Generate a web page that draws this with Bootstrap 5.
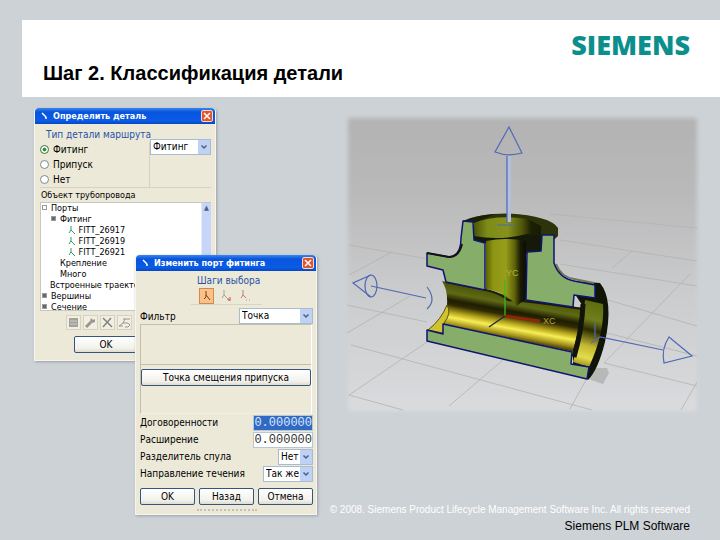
<!DOCTYPE html>
<html lang="ru">
<head>
<meta charset="utf-8">
<meta name="viewport" content="width=device-width, initial-scale=1">
<title>Шаг 2. Классификация детали</title>
<link rel="stylesheet" href="https://cdn.jsdelivr.net/npm/bootstrap@5.3.0/dist/css/bootstrap.min.css">
<style>
  body { background: #cdd2d6; color: #000; font-family: "Liberation Sans", Arial, sans-serif; }
  .slide-head { margin: 20px 0 0 22px; padding: 11px 30px 9px 21px; }
  .brand { color: #0b8f8d; font: 800 27px/28px "Open Sans", sans-serif; }
  .slide-title { font-size: 20px; line-height: 29px; }
  .stage { padding: 0 18px 0 0; }
  .desktop { flex: 0 0 344px; height: 420px; }
  .scene { margin-top: 17px; min-width: 0; }

  .win { width: 182px; background: #ece9d8; border: 1px solid #f6f5ef; border-top: 0; border-radius: 4px 4px 0 0;
         box-shadow: 1px 1px 3px #9a9fa5; font-family: "DejaVu Sans Condensed", "DejaVu Sans", sans-serif; font-size: 10px; line-height: 15px; }
  .win-part { left: 34px; top: 11px; }
  .win-port { left: 135px; top: 158px; }
  .win-bar { height: 16px; padding: 0 2px 0 6px; background: linear-gradient(#3b86ee, #0855dd 25%, #0a5be6 80%, #0747c0);
             border-radius: 4px 4px 0 0; color: #fff; }
  .win-bar h2 { font-size: 9px; line-height: 16px; font-weight: bold; margin: 0; }
  .win-close { width: 12px; height: 12px; border: 1px solid #f3d8cf; border-radius: 2px; background: #e2552c; padding: 0; }
  .win-close svg, .tool svg { display: block; margin: auto; }
  .win-body { padding: 3px 3px 3px 4px; }
  .win-part .win-body { padding: 4px 4px 7px 5px; }
  legend.cap { float: none; width: auto; font-size: 10px; line-height: 14px; color: #2a52a5; margin: 0; padding: 0 2px; white-space: nowrap; }
  .kinds { width: 110px; border-right: 1px solid #d6d2c0; }
  .opt { min-height: 15px; line-height: 15px; }
  .opt input { appearance: none; width: 9px; height: 9px; margin: 0; border: 1px solid #7b8a92; border-radius: 50%; background: #fff; }
  .opt input:checked { background: radial-gradient(#1fa31f 35%, #fff 45%); border-color: #3d7048; }
  .pick { appearance: none; height: 16px; border: 1px solid #a9bccf; border-radius: 0; padding: 0 13px 0 2px; font-size: 10px; line-height: 14px; color: #000;
          background: url("data:image/svg+xml,%3Csvg xmlns='http://www.w3.org/2000/svg' width='12' height='14'%3E%3Crect width='12' height='14' fill='%23bfd2f5'/%3E%3Cpath d='M3.5 5.5l2.5 2.5 2.5-2.5' fill='none' stroke='%234d6185' stroke-width='1.5'/%3E%3C/svg%3E") right center no-repeat #fff; }
  .kind-pick { margin-top: 11px; }
  .tree-cap { font-size: 9px; line-height: 14px; padding-left: 1px; border-top: 1px solid #d6d2c0; }
  .tree { background: #fff; border: 1px solid #c5c9c2; border-right-width: 0; height: 109px; overflow: hidden; font-size: 9px; line-height: 11px; }
  .tree ul { list-style: none; margin: 0; padding: 0; }
  .tree li { white-space: nowrap; }
  .tree .lv1 { padding-left: 9px; }
  .tree .lv2 { padding-left: 19px; }
  .tree .lv3 { padding-left: 27px; }
  .fold { width: 5px; height: 5px; border: 1px solid #9a9a9a; background: #666; display: inline-block; margin: 0 4px 1px 1px; }
  .fold.open { background: #fff; }
  .scroller { width: 10px; background: #c6d5f8; border-left: 1px solid #e4ebfb; color: #47618f; font-size: 7px; }
  .xp { border: 1px solid #35557c; border-radius: 2px; background: linear-gradient(#fff, #f2f1ec 75%, #dedbcf); height: 17px; padding: 0;
        font-size: 10px; line-height: 14px; color: #000; }
  .tool { width: 15px; height: 15px; border: 1px solid #d6d2c1; background: #f1efe4; padding: 0; }
  .tool.on { background: #fbc18b; border-color: #d08a50; }
  .tool.bare { border-color: transparent; background: transparent; }
  .tools { gap: 2px; margin: 4px 0 6px 26px; }
  .ok-row { padding-left: 34px; }
  .ok-row .xp { width: 64px; }
  .steps { width: 71px; border-bottom: 1px solid #d9d5c3; }
  .steps .tool { height: 16px; }
  .filter-row { padding: 3px 0 0; }
  .filter-row .pick { width: 74px; }
  .well { border: 1px solid #c3bfae; border-right-color: #fff; border-bottom-color: #f3f0e2; height: 90px; margin-right: 1px; }
  .well-top { height: 40px; border-bottom: 1px solid #c3bfae; margin-bottom: 4px; }
  .num { width: 60px; height: 16px; border: 1px solid #b9c7d3; border-radius: 0; padding: 0; text-align: right; background: #fff; color: #333;
         font: 12px/14px "Liberation Mono", monospace; }
  .num.sel { background: #316ac5; color: #d9e6fb; }
  .line { min-height: 17px; }
  .answers { margin-top: 6px; }
  .grip { width: 60px; border-top: 2px dotted #c5c1b0; margin: 4px auto 0; height: 2px; }
  .copy { font-size: 10px; line-height: 14px; color: #fff; }
  .unit { font-size: 12px; line-height: 18px; }
  footer { padding: 0 30px 0 0; margin-top: -14px; }
</style>
<script src="https://cdn.jsdelivr.net/npm/bootstrap@5.3.0/dist/js/bootstrap.bundle.min.js"></script>
</head>
<body>
<header class="slide-head bg-white d-flex flex-column">
  <div class="brand text-end">SIEMENS</div>
  <h1 class="slide-title fw-bold mb-0">Шаг 2. Классификация детали</h1>
</header>

<main class="stage d-flex align-items-start">
  <div class="desktop position-relative">
    <section class="win win-part position-absolute">
      <div class="win-bar d-flex align-items-center">
        <svg width="8" height="8" viewBox="0 0 8 8" class="me-1"><path d="M1 1l4 4M4 6h2" stroke="#fff" stroke-width="1.5"/></svg>
        <h2 class="flex-grow-1">Определить деталь</h2>
        <button class="win-close" aria-label="Закрыть"><svg width="8" height="8" viewBox="0 0 8 8"><path d="M1 1l6 6M7 1L1 7" stroke="#fff" stroke-width="1.5"/></svg></button>
      </div>
      <div class="win-body">
        <div class="d-flex align-items-start">
          <fieldset class="kinds">
            <legend class="cap ms-1">Тип детали маршрута</legend>
            <label class="opt d-flex align-items-center gap-1"><input type="radio" name="kind" checked>Фитинг</label>
            <label class="opt d-flex align-items-center gap-1"><input type="radio" name="kind">Припуск</label>
            <label class="opt d-flex align-items-center gap-1"><input type="radio" name="kind">Нет</label>
          </fieldset>
          <select class="pick kind-pick flex-grow-1" aria-label="Тип"><option>Фитинг</option></select>
        </div>
        <div class="tree-cap">Объект трубопровода</div>
        <div class="tree d-flex">
          <ul class="flex-grow-1">
            <li><span class="fold open"></span>Порты</li>
            <li class="lv1"><span class="fold"></span>Фитинг</li>
            <li class="lv3"><svg width="8" height="9" viewBox="0 0 8 9"><path d="M3 0v4L1 7M3 4l4 4" fill="none" stroke="#3b9a63"/></svg> FITT_26917</li>
            <li class="lv3"><svg width="8" height="9" viewBox="0 0 8 9"><path d="M3 0v4L1 7M3 4l4 4" fill="none" stroke="#3b9a63"/></svg> FITT_26919</li>
            <li class="lv3"><svg width="8" height="9" viewBox="0 0 8 9"><path d="M3 0v4L1 7M3 4l4 4" fill="none" stroke="#3b9a63"/></svg> FITT_26921</li>
            <li class="lv2">Крепление</li>
            <li class="lv2">Много</li>
            <li class="lv1">Встроенные траекто...</li>
            <li><span class="fold"></span>Вершины</li>
            <li><span class="fold"></span>Сечение</li>
          </ul>
          <div class="scroller text-center">▲</div>
        </div>
        <div class="d-flex tools">
          <button class="tool" aria-label="Список"><svg width="11" height="11" viewBox="0 0 11 11"><path d="M1 1h9v9H1z" fill="#a3a39a"/><path d="M2 4h7M2 7h7" stroke="#ccc"/></svg></button>
          <button class="tool" aria-label="Правка"><svg width="11" height="11" viewBox="0 0 11 11"><path d="M1 10l5-5" stroke="#96968e" stroke-width="3"/><path d="M6 1L5 4l2 2 3-1V2L8 3z" fill="#96968e"/></svg></button>
          <button class="tool" aria-label="Удалить"><svg width="11" height="11" viewBox="0 0 11 11"><path d="M1 1l9 9M9 1L1 10" stroke="#85857e" stroke-width="1.5"/></svg></button>
          <button class="tool" aria-label="Объект"><svg width="13" height="11" viewBox="0 0 13 11"><path d="M5 2h7M7 2L5 6h5l2 2-2 2H7M5 6L1 9h4" fill="none" stroke="#96968e"/></svg></button>
        </div>
        <div class="ok-row"><button class="xp d-block">OK</button></div>
      </div>
    </section>

    <section class="win win-port position-absolute">
      <div class="win-bar d-flex align-items-center">
        <svg width="8" height="8" viewBox="0 0 8 8" class="me-1"><path d="M1 1l4 4M4 6h2" stroke="#fff" stroke-width="1.5"/></svg>
        <h2 class="flex-grow-1">Изменить порт фитинга</h2>
        <button class="win-close" aria-label="Закрыть"><svg width="8" height="8" viewBox="0 0 8 8"><path d="M1 1l6 6M7 1L1 7" stroke="#fff" stroke-width="1.5"/></svg></button>
      </div>
      <div class="win-body">
        <fieldset class="steps mx-auto">
          <legend class="cap ms-1">Шаги выбора</legend>
          <div class="d-flex gap-1 ps-2">
            <button class="tool on" aria-label="Шаг 1"><svg width="10" height="12" viewBox="0 0 10 12"><path d="M4 1v6L2 9M4 5l4 5" fill="none" stroke="#743c16"/></svg></button>
            <button class="tool bare" aria-label="Шаг 2"><svg width="12" height="12" viewBox="0 0 12 12"><path d="M4 0v5L2 8M4 5l3 3" fill="none" stroke="#b09a92"/><path d="M7 9h2v2M10 7v4" stroke="#c8554a" fill="none"/></svg></button>
            <button class="tool bare" aria-label="Шаг 3"><svg width="12" height="12" viewBox="0 0 12 12"><path d="M4 0v5L2 8M4 5l3 3" fill="none" stroke="#b08080"/><path d="M7 10h1M10 10h1" stroke="#b69a92"/></svg></button>
          </div>
        </fieldset>
        <div class="d-flex align-items-center filter-row">
          <label for="flt" class="flex-grow-1">Фильтр</label>
          <select id="flt" class="pick"><option>Точка</option></select>
        </div>
        <div class="well">
          <div class="well-top"></div>
          <button class="xp w-100 d-block">Точка смещения припуска</button>
        </div>
        <div class="line d-flex align-items-center"><label for="n1" class="flex-grow-1">Договоренности</label><input id="n1" class="num sel" value="0.000000"></div>
        <div class="line d-flex align-items-center"><label for="n2" class="flex-grow-1">Расширение</label><input id="n2" class="num" value="0.000000"></div>
        <div class="line d-flex align-items-center"><label for="s1" class="flex-grow-1">Разделитель спула</label><select id="s1" class="pick"><option>Нет</option></select></div>
        <div class="line d-flex align-items-center"><label for="s2" class="flex-grow-1">Направление течения</label><select id="s2" class="pick"><option>Так же</option></select></div>
        <div class="d-flex gap-1 answers">
          <button class="xp flex-fill w-100">OK</button><button class="xp flex-fill w-100">Назад</button><button class="xp flex-fill w-100">Отмена</button>
        </div>
        <div class="grip"></div>
      </div>
    </section>
  </div>

  <figure class="scene flex-grow-1 mb-0">
    <svg class="d-block w-100" viewBox="344 114 358 302" role="img" aria-label="Тройник в разрезе">
      <defs>
        <linearGradient id="bg" x1="0" y1="0" x2="0" y2="1"><stop offset="0" stop-color="#b3b3b4"/><stop offset=".25" stop-color="#b9b9ba"/><stop offset=".6" stop-color="#cbcccd"/><stop offset="1" stop-color="#dadbdd"/></linearGradient>
        <linearGradient id="gv" gradientUnits="userSpaceOnUse" x1="485" y1="0" x2="526" y2="0"><stop offset="0" stop-color="#565b00"/><stop offset=".2" stop-color="#8c9613"/><stop offset=".5" stop-color="#989e1c"/><stop offset=".72" stop-color="#5f6408"/><stop offset=".86" stop-color="#1b1c04"/><stop offset="1" stop-color="#0b0c08"/></linearGradient>
        <linearGradient id="gf" gradientUnits="userSpaceOnUse" x1="474" y1="0" x2="541" y2="0"><stop offset="0" stop-color="#4c5409"/><stop offset=".2" stop-color="#7d8c17"/><stop offset=".5" stop-color="#87921d"/><stop offset=".72" stop-color="#4f5508"/><stop offset=".85" stop-color="#1d2005"/><stop offset="1" stop-color="#181b05"/></linearGradient>
        <linearGradient id="gh" gradientUnits="userSpaceOnUse" x1="512" y1="295" x2="504" y2="339"><stop offset="0" stop-color="#4c5508"/><stop offset=".2" stop-color="#5f6a14"/><stop offset=".36" stop-color="#1f1d02"/><stop offset=".46" stop-color="#2f2a02"/><stop offset=".62" stop-color="#b4a31a"/><stop offset=".74" stop-color="#f7ef55"/><stop offset=".88" stop-color="#a6941c"/><stop offset="1" stop-color="#3a3404"/></linearGradient>
        <linearGradient id="ge" gradientUnits="userSpaceOnUse" x1="600" y1="300" x2="583" y2="368"><stop offset="0" stop-color="#5a6a0c"/><stop offset=".3" stop-color="#727e1c"/><stop offset=".45" stop-color="#2b2b02"/><stop offset=".68" stop-color="#c4b932"/><stop offset=".85" stop-color="#e4dc4c"/><stop offset="1" stop-color="#8a8016"/></linearGradient>
        <filter id="soft" x="-5%" y="-5%" width="110%" height="110%"><feGaussianBlur stdDeviation="2"/></filter>
      </defs>
      <rect x="348" y="118" width="349" height="293" fill="url(#bg)" filter="url(#soft)"/>
      <g fill="none" stroke="#b2b3b2" stroke-width=".8">
        <path d="M349 245L428 259M347 305L427 322M351 345L592 410M349 395L403 410M608 300L697 326M560 240L697 261M550 214L697 228M560 264L697 286M603 332L697 356M604 363L697 386M349 395L430 340M449 406L510 354M347 333L410 296M349 275L392 252M570 409L586 380M604 363L690 274M681 410L697 382M612 268L632 251"/>
      </g>
      <path d="M594 368L607 368L609 373L603 384L588 379z" fill="#b7b9b8"/>
      <!-- bores -->
      <path d="M463 221Q480 213 509 213.500Q550 216 558 228V236L541 252L485 243L474 240V222z" fill="#2d330a"/>
      <path d="M463 221Q478 215 495 214L474 223z" fill="#1a1f0a"/>
      <path d="M474 223Q495 214 528 219L541 226V251L526 251L525 236Q500 241 474 237z" fill="url(#gf)"/>
      <path d="M474 236Q500 241 527 234L541 236V252L525 254Q505 240 485 243L474 240z" fill="#15190a"/>
      <path d="M442 281L485 290L525 299L583 308L575 352L443 324L430 330Q442 318 447 305Q448 290 442 281z" fill="url(#gh)"/>
      <path d="M446 282L486 290Q500 293 508 300Q520 300 583 309" fill="none" stroke="#1a1d05" stroke-width="2"/>
      <path d="M486 241Q506 237 526 241V300Q521 302 517 306Q506 292 486 289z" fill="url(#gv)"/>
      <path d="M447 305Q452 313 444 323L443 333L428 330Q441 320 447 305z" fill="#d0c332" stroke="#5a5410"/>
      <path d="M554 262Q560 278 573 281L600 283Q614 300 605 342Q598 370 588 380L573 364V351L584 308z" fill="#111507"/>
      <path d="M585 300L603 304Q605 332 589 367L573 362Q582 334 585 300z" fill="url(#ge)"/>
      <path d="M583 304Q582 330 574 357" fill="none" stroke="#11140a" stroke-width="5"/>
      <!-- section faces -->
      <g fill="#86ad69" stroke="#10136f" stroke-width="1.5" stroke-linejoin="round">
        <path d="M463 221L473 222L474 240L485 243V290L446 282L443 270L427 266V253L449 257Q461 256 461 238z"/>
        <path d="M542 235H554V263Q559 278 574 281L595 285V298L574 295L573 307L526 300L527 252L541 251z"/>
        <path d="M427 330L443 334V324L572 352L571 364L589 367L587 379L427 341z"/>
      </g>
      <path d="M556 264Q561 277 574 279L594 283" fill="none" stroke="#73775f" stroke-width="2"/>
      <path d="M427 253L449 257Q459 257 462 244" fill="none" stroke="#11131c" stroke-width="2"/>
      <!-- axes -->
      <path d="M505 280V316" stroke="#39b91b" stroke-width="1.3"/>
      <path d="M505 316L540 321" stroke="#8e260c" stroke-width="3"/>
      <path d="M505 316L489 327" stroke="#23204a" stroke-width="1.3"/>
      <text x="506" y="276" font-family="Liberation Sans" font-size="9" fill="#b1b32d">YC</text>
      <text x="543" y="324" font-family="Liberation Sans" font-size="9" fill="#b2a13b">XC</text>
      <!-- direction arrows -->
      <g fill="none" stroke="#4f69b4" stroke-width="1.2">
        <path d="M509 127L495 152Q508 157 522 153z"/>
        <path d="M509 156V222" stroke="#b3c0dc" stroke-width="4"/>
        <path d="M507 156V223M497 225H515"/>
        <path d="M371 275L353 283L371 297M371 286L426 298M427 287Q437 300 427 309"/>
        <ellipse cx="371" cy="286" rx="6" ry="11"/>
        <path d="M595 323V337M591 343L600 337L663 350M669 337L692 356L664 363Q661 349 669 337z"/>
      </g>
    </svg>
  </figure>
</main>

<footer class="text-end">
  <div class="copy">© 2008. Siemens Product Lifecycle Management Software Inc. All rights reserved</div>
  <div class="unit">Siemens PLM Software</div>
</footer>
</body>
</html>
